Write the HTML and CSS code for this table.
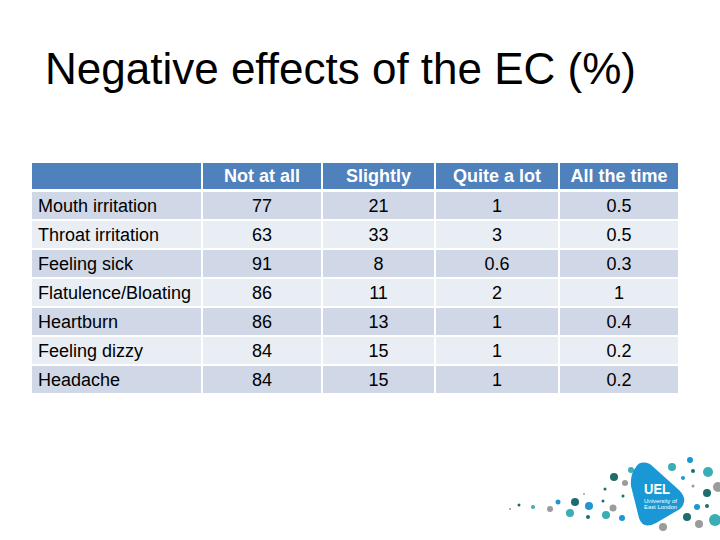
FILE: index.html
```html
<!DOCTYPE html>
<html>
<head>
<meta charset="utf-8">
<link rel="stylesheet" href="styles.css">
</head>
<body>
<div class="slide">
  <h1 class="title">Negative effects of the EC (%)</h1>
  <div class="table">
    <div class="cell head"></div>
    <div class="cell head num">Not at all</div>
    <div class="cell head num">Slightly</div>
    <div class="cell head num">Quite a lot</div>
    <div class="cell head num">All the time</div>

    <div class="cell odd label">Mouth irritation</div>
    <div class="cell odd num">77</div>
    <div class="cell odd num">21</div>
    <div class="cell odd num">1</div>
    <div class="cell odd num">0.5</div>

    <div class="cell even label">Throat irritation</div>
    <div class="cell even num">63</div>
    <div class="cell even num">33</div>
    <div class="cell even num">3</div>
    <div class="cell even num">0.5</div>

    <div class="cell odd label">Feeling sick</div>
    <div class="cell odd num">91</div>
    <div class="cell odd num">8</div>
    <div class="cell odd num">0.6</div>
    <div class="cell odd num">0.3</div>

    <div class="cell even label">Flatulence/Bloating</div>
    <div class="cell even num">86</div>
    <div class="cell even num">11</div>
    <div class="cell even num">2</div>
    <div class="cell even num">1</div>

    <div class="cell odd label">Heartburn</div>
    <div class="cell odd num">86</div>
    <div class="cell odd num">13</div>
    <div class="cell odd num">1</div>
    <div class="cell odd num">0.4</div>

    <div class="cell even label">Feeling dizzy</div>
    <div class="cell even num">84</div>
    <div class="cell even num">15</div>
    <div class="cell even num">1</div>
    <div class="cell even num">0.2</div>

    <div class="cell odd label">Headache</div>
    <div class="cell odd num">84</div>
    <div class="cell odd num">15</div>
    <div class="cell odd num">1</div>
    <div class="cell odd num">0.2</div>
  </div>

  <svg class="logo" width="220" height="100" viewBox="0 0 220 100" xmlns="http://www.w3.org/2000/svg">
    <g fill="#3aaeb5">
      <circle cx="33" cy="67" r="2"/>
      <circle cx="70" cy="73" r="4"/>
      <circle cx="106" cy="75" r="4"/>
      <circle cx="131" cy="30" r="3"/>
      <circle cx="172" cy="27" r="4"/>
      <circle cx="208" cy="32" r="5"/>
      <circle cx="215" cy="80" r="6"/>
    </g>
    <g fill="#1f6c6c">
      <circle cx="19" cy="65" r="1.5"/>
      <circle cx="75" cy="62" r="4"/>
      <circle cx="88" cy="77" r="2"/>
      <circle cx="103" cy="61" r="1.5"/>
      <circle cx="114" cy="37" r="4"/>
      <circle cx="105" cy="49" r="1.5"/>
      <circle cx="123" cy="56" r="1.5"/>
      <circle cx="193" cy="31" r="2"/>
      <circle cx="207" cy="66" r="2"/>
      <circle cx="187" cy="77" r="4"/>
      <circle cx="207" cy="53" r="4"/>
    </g>
    <g fill="#9b9b9b">
      <circle cx="50" cy="69" r="3"/>
      <circle cx="84" cy="54" r="1"/>
      <circle cx="113" cy="68" r="3.5"/>
      <circle cx="125" cy="43" r="3"/>
      <circle cx="163" cy="87" r="4"/>
      <circle cx="199" cy="84" r="4"/>
      <circle cx="218" cy="47" r="5"/>
      <circle cx="193" cy="46" r="1.5"/>
    </g>
    <g fill="#1e96d2">
      <circle cx="58" cy="62" r="2.5"/>
      <circle cx="89" cy="66" r="4"/>
      <circle cx="122" cy="78" r="3"/>
      <circle cx="183" cy="38" r="2"/>
      <circle cx="190" cy="20" r="3"/>
      <circle cx="197" cy="67" r="3"/>
    </g>
    <circle cx="10" cy="69" r="1" fill="#6fa8a8"/>
    <path d="M136 27 Q140 20 150 24 L179 50 Q189 60 180 69 L156 83 Q143 90 139 78 L131 46 Q130 34 136 27 Z" fill="#1a98d5"/>
    <text x="144" y="54" class="uel" textLength="26" lengthAdjust="spacingAndGlyphs">UEL</text>
    <text x="144" y="63" class="uni" textLength="33" lengthAdjust="spacingAndGlyphs">University of</text>
    <text x="144" y="69" class="uni" textLength="33" lengthAdjust="spacingAndGlyphs">East London</text>
  </svg>
</div>
</body>
</html>
```

FILE: styles.css
```css
html, body {
  margin: 0;
  padding: 0;
  background: #ffffff;
}

.slide {
  position: relative;
  width: 720px;
  height: 540px;
  overflow: hidden;
  font-family: "Liberation Sans", Arial, sans-serif;
  color: #000000;
}

.title {
  margin: 0;
  padding: 44px 0 0 45px;
  font-size: 44px;
  line-height: 50px;
  font-weight: normal;
}

.table {
  display: grid;
  grid-template-columns: 169px 118px 111px 122px 118px;
  grid-template-rows: repeat(8, 27px);
  column-gap: 2px;
  row-gap: 2px;
  margin: 69px 0 0 32px;
  width: 646px;
}

.cell {
  display: flex;
  align-items: center;
  font-size: 18px;
  line-height: 20px;
  white-space: nowrap;
}

.head {
  background: #4f81bd;
  color: #ffffff;
  font-weight: bold;
  margin-bottom: 1px;
}

.odd {
  background: #d0d8e8;
}

.even {
  background: #e9edf4;
}

.label {
  padding-left: 6px;
}

.num {
  justify-content: center;
}

.logo {
  position: absolute;
  left: 500px;
  top: 440px;
}

.uel {
  font-family: "Liberation Sans", Arial, sans-serif;
  font-weight: bold;
  font-size: 15px;
  fill: #ffffff;
}

.uni {
  font-family: "Liberation Sans", Arial, sans-serif;
  font-size: 5.5px;
  fill: #ffffff;
}
```
